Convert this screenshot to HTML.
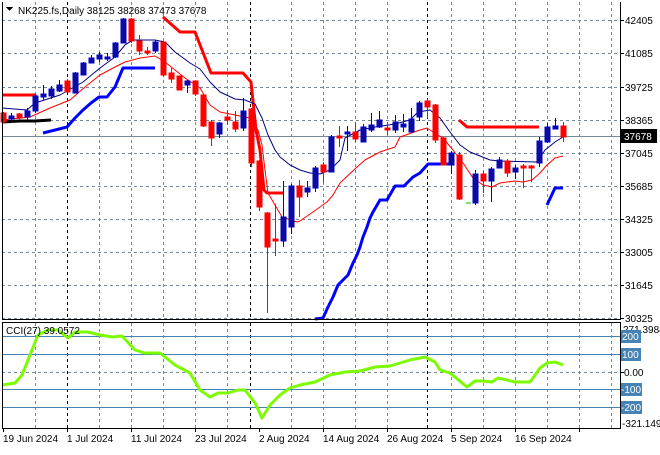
<!DOCTYPE html>
<html><head><meta charset="utf-8"><style>
body{margin:0;background:#fff;width:660px;height:450px;overflow:hidden;font-family:"Liberation Sans",sans-serif}
svg text{font-family:"Liberation Sans",sans-serif;font-size:10px}
</style></head><body>
<svg width="660" height="450" xmlns="http://www.w3.org/2000/svg" shape-rendering="crispEdges">
<rect width="660" height="450" fill="#fff"/>
<g stroke="#778899" stroke-dasharray="3,3" stroke-width="1">
<line x1="2" y1="20.5" x2="620" y2="20.5"/><line x1="2" y1="53.5" x2="620" y2="53.5"/><line x1="2" y1="87.5" x2="620" y2="87.5"/><line x1="2" y1="120.5" x2="620" y2="120.5"/><line x1="2" y1="153.5" x2="620" y2="153.5"/><line x1="2" y1="186.5" x2="620" y2="186.5"/><line x1="2" y1="219.5" x2="620" y2="219.5"/><line x1="2" y1="252.5" x2="620" y2="252.5"/><line x1="2" y1="285.5" x2="620" y2="285.5"/><line x1="2" y1="318.5" x2="620" y2="318.5"/>
<line x1="2" y1="372.5" x2="620" y2="372.5"/>
</g>
<g stroke="#778899" stroke-dasharray="3,3">
<path d="M35.5 2V319M99.5 2V319M131.5 2V319M163.5 2V319M195.5 2V319M227.5 2V319M291.5 2V319M323.5 2V319M355.5 2V319M387.5 2V319M451.5 2V319M483.5 2V319M515.5 2V319M547.5 2V319M579.5 2V319M611.5 2V319"/>
<path d="M35.5 323V428M99.5 323V428M131.5 323V428M163.5 323V428M195.5 323V428M227.5 323V428M291.5 323V428M323.5 323V428M355.5 323V428M387.5 323V428M451.5 323V428M483.5 323V428M515.5 323V428M547.5 323V428M579.5 323V428M611.5 323V428"/>
</g>
<g stroke="#000" stroke-dasharray="3,3"><path d="M67.5 2V319M250.5 2V319M427.5 2V319M67.5 323V428M250.5 323V428M427.5 323V428"/></g>
<line x1="2" y1="136.5" x2="620" y2="136.5" stroke="#778899"/>
<g stroke="#4682b4"><path d="M2 336.5H620M2 354.5H620M2 389.5H620M2 407.5H620"/></g>
<g fill="none" stroke-linejoin="round" shape-rendering="auto">
<polyline stroke="#000" stroke-width="3" points="2,122 20,121 35,121 51,120"/>
<polyline stroke="#f00" stroke-width="3" points="2,95 35,95 37,110"/>
<polyline stroke="#f00" stroke-width="3" points="163,17 180,32 195,32 211,73 243,73 251,82 256,130 260,150 264,190 267,193 283,193"/>
<polyline stroke="#f00" stroke-width="3" points="459,120 467,127 539,127"/>
<polyline stroke="#0000ff" stroke-width="3" points="43,133 67,127 75,118 83,110 91,103 99,97 107,97 115,87 123,68 155,68"/>
<polyline stroke="#0000ff" stroke-width="3" points="315,319 323,318 328,307 333,297 338,285 343,280 348,275 353,263 357,255 360,247 363,237 367,227 370,218 373,212 380,200 387,200 395,186 404,186 413,177 420,173 428,164 452,164"/>
<polyline stroke="#0000ff" stroke-width="3" points="547,205 555,188 563,188"/>
<polyline stroke="#000080" stroke-width="1" points="2,108 27,110 35,103 60,95 83,82 100,68 115,57 125,45 133,40 155,40 165,42 175,52 190,63 200,69 210,82 220,92 235,99 245,100 255,104 262,118 268,135 275,150 280,157 290,165 300,170 310,173 320,174 330,170 340,160 345,138 360,130 375,127 395,124 410,120 418,112 430,110 440,118 450,132 460,145 470,152 490,160 500,161 537,162 545,150 555,142 563,137"/>
<polyline stroke="#f00" stroke-width="1" points="2,120 30,117 50,108 70,100 85,87 100,75 115,67 125,62 140,58 155,56 165,62 175,70 185,78 200,88 210,105 220,112 235,115 250,118 258,130 262,145 265,170 268,193 282,217 297,222 300,221 313,212 327,202 333,195 340,183 357,167 365,160 380,152 395,147 400,137 420,130 427,128 433,132 443,138 453,150 463,163 473,178 483,185 492,187 500,183 515,181 523,182 532,180 540,173 547,165 555,158 563,156"/>
<line x1="466" y1="203" x2="471" y2="203" stroke="#00c000"/>
</g>
<g id="c">
<g stroke="#f00" fill="#f00">
<path d="M3.5 112V123M19.5 113V120M67.5 79V92M131.5 18V43M139.5 35V55M147.5 47V55M163.5 41V77M171.5 68V83M179.5 76V90M195.5 81V96M203.5 94V127M211.5 120V146M227.5 110V125M235.5 111V132M251.5 108V167M259.5 160V211M267.5 212V313M275.5 204V256M299.5 180V217M323.5 162V183M339.5 126V147M355.5 122V142M387.5 122V135M427.5 99V118M435.5 104V143M443.5 137V165M459.5 152V200M483.5 171V193M507.5 159V177M523.5 164V188M531.5 165V182M563.5 122V142"/>
<rect x="1" y="113" width="5" height="9"/><rect x="17" y="114" width="5" height="4"/><rect x="65" y="81" width="5" height="11"/><rect x="129" y="19" width="5" height="22"/><rect x="137" y="41" width="5" height="10"/><rect x="145" y="51" width="5" height="2"/><rect x="161" y="42" width="5" height="33"/><rect x="169" y="73" width="5" height="6"/><rect x="177" y="76" width="5" height="14"/><rect x="193" y="81" width="5" height="13"/><rect x="201" y="95" width="5" height="31"/><rect x="209" y="122" width="5" height="16"/><rect x="225" y="117" width="5" height="3"/><rect x="233" y="122" width="5" height="7"/><rect x="249" y="109" width="5" height="54"/><rect x="257" y="161" width="5" height="46"/><rect x="265" y="213" width="5" height="34"/><rect x="273" y="239" width="5" height="2"/><rect x="297" y="186" width="5" height="11"/><rect x="321" y="165" width="5" height="7"/><rect x="337" y="136" width="5" height="2"/><rect x="353" y="132" width="5" height="7"/><rect x="385" y="128" width="5" height="2"/><rect x="425" y="101" width="5" height="6"/><rect x="433" y="105" width="5" height="35"/><rect x="441" y="138" width="5" height="27"/><rect x="457" y="155" width="5" height="44"/><rect x="481" y="174" width="5" height="7"/><rect x="505" y="161" width="5" height="12"/><rect x="521" y="166" width="5" height="2"/><rect x="529" y="166" width="5" height="2"/><rect x="561" y="126" width="5" height="11"/>
</g>
<g stroke="#0000c8" fill="#0c0c9c">
<path d="M11.5 113V123M27.5 108V120M35.5 95V113M43.5 85V100M51.5 86V99M59.5 80V92M75.5 72V93M83.5 62V75M91.5 55V63M99.5 52V62M107.5 53V61M115.5 42V58M123.5 18V43M155.5 40V53M187.5 80V93M219.5 122V138M243.5 98V131M283.5 181V247M291.5 184V234M307.5 181V197M315.5 166V192M331.5 135V172M347.5 126V151M363.5 124V142M371.5 113V132M379.5 111V128M395.5 115V133M403.5 114V132M411.5 108V132M419.5 101V121M451.5 151V174M475.5 170V205M491.5 167V202M499.5 157V168M515.5 165V179M539.5 137V167M547.5 123V143M555.5 118V129"/>
<rect x="9" y="116" width="5" height="3"/><rect x="25" y="111" width="5" height="6"/><rect x="33" y="96" width="5" height="15"/><rect x="41" y="94" width="5" height="3"/><rect x="49" y="89" width="5" height="7"/><rect x="57" y="85" width="5" height="6"/><rect x="73" y="73" width="5" height="20"/><rect x="81" y="63" width="5" height="12"/><rect x="89" y="58" width="5" height="5"/><rect x="97" y="55" width="5" height="4"/><rect x="105" y="57" width="5" height="2"/><rect x="113" y="43" width="5" height="14"/><rect x="121" y="19" width="5" height="24"/><rect x="153" y="42" width="5" height="9"/><rect x="185" y="81" width="5" height="4"/><rect x="217" y="123" width="5" height="11"/><rect x="241" y="111" width="5" height="17"/><rect x="281" y="217" width="5" height="24"/><rect x="289" y="186" width="5" height="41"/><rect x="305" y="188" width="5" height="4"/><rect x="313" y="168" width="5" height="20"/><rect x="329" y="137" width="5" height="35"/><rect x="345" y="132" width="5" height="2"/><rect x="361" y="127" width="5" height="15"/><rect x="369" y="125" width="5" height="5"/><rect x="377" y="120" width="5" height="7"/><rect x="393" y="122" width="5" height="8"/><rect x="401" y="124" width="5" height="3"/><rect x="409" y="119" width="5" height="13"/><rect x="417" y="103" width="5" height="14"/><rect x="449" y="153" width="5" height="12"/><rect x="473" y="174" width="5" height="29"/><rect x="489" y="169" width="5" height="12"/><rect x="497" y="160" width="5" height="8"/><rect x="513" y="168" width="5" height="4"/><rect x="537" y="141" width="5" height="22"/><rect x="545" y="127" width="5" height="15"/><rect x="553" y="126" width="5" height="3"/>
</g>
</g>
<polyline fill="none" stroke="#7cfc00" stroke-width="3" stroke-linejoin="round" shape-rendering="auto" points="2,385 15,383 22,375 30,355 38,335 48,330 58,330 68,338 75,332 88,332 100,335 112,337 122,336 135,350 145,353 160,353 175,365 190,373 200,390 210,397 218,393 228,393 238,390 245,390 255,403 262,418 270,405 280,395 290,388 300,385 315,382 330,375 345,372 360,371 375,367 390,366 410,360 425,357 435,362 440,370 450,373 467,387 475,381 483,381 492,382 498,378 507,380 515,382 530,382 540,368 547,363 555,362 563,365"/>
<g stroke="#000" fill="none">
<path d="M2.5 2V319.5H620.5V2"/>
<path d="M2.5 322.5H620.5V428.5H2.5Z"/>
</g>
<g stroke="#000"><path d="M620 20.5h4M620 53.5h4M620 87.5h4M620 120.5h4M620 153.5h4M620 186.5h4M620 219.5h4M620 252.5h4M620 285.5h4M620 318.5h4M620 372.5h4M620 336.5h4M620 354.5h4M620 389.5h4M620 407.5h4M3.5 428v4M67.5 428v4M131.5 428v4M195.5 428v4M259.5 428v4M323.5 428v4M387.5 428v4M451.5 428v4M515.5 428v4M579.5 428v4"/></g>
<g fill="#000">
<text x="625" y="24">42405</text><text x="625" y="57">41085</text><text x="625" y="91">39725</text><text x="625" y="124">38365</text><text x="625" y="157">37045</text><text x="625" y="190">35685</text><text x="625" y="223">34325</text><text x="625" y="256">33005</text><text x="625" y="289">31645</text><text x="625" y="322">30325</text>
<text x="623" y="333">271.3984</text><text x="624" y="376">0.00</text><text x="622" y="427">-321.149</text>
</g>
<rect x="621" y="129" width="36" height="14" fill="#000"/><text x="624" y="140" fill="#fff">37678</text>
<g fill="#4682b4"><rect x="621" y="330" width="20" height="13"/><rect x="621" y="348" width="20" height="13"/><rect x="621" y="383" width="21" height="13"/><rect x="621" y="401" width="21" height="13"/></g>
<g fill="#fff"><text x="622" y="340">200</text><text x="622" y="358">100</text><text x="621" y="393">-100</text><text x="621" y="411">-200</text></g>
<path d="M6 7h7l-3.5 4z" fill="#000"/>
<text x="18" y="14" fill="#000">NK225.fs,Daily  38125 38268 37473 37678</text>
<text x="6" y="334" fill="#000">CCI(27) 39.0572</text>
<g fill="#000">
<text x="3" y="442">19 Jun 2024</text><text x="67" y="442">1 Jul 2024</text><text x="131" y="442">11 Jul 2024</text><text x="195" y="442">23 Jul 2024</text><text x="259" y="442">2 Aug 2024</text><text x="323" y="442">14 Aug 2024</text><text x="387" y="442">26 Aug 2024</text><text x="451" y="442">5 Sep 2024</text><text x="515" y="442">16 Sep 2024</text>
</g>
</svg>
</body></html>
